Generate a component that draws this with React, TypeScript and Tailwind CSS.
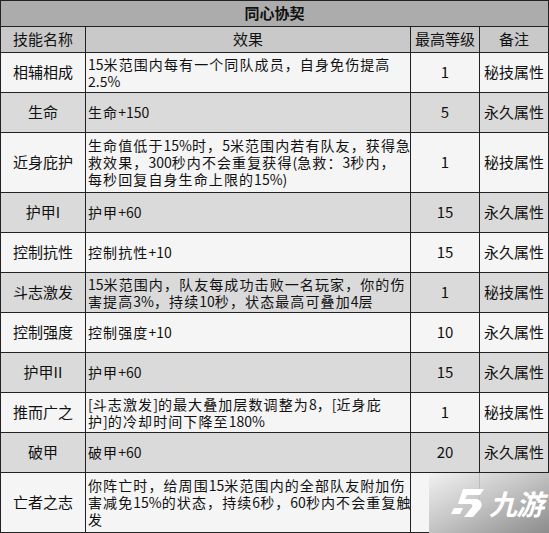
import React from "react";

type Row = {
  name: string;
  lines: string[];
  level: string;
  note: string;
  tall?: boolean;
};

const rows: Row[] = [
  { name: "相辅相成", lines: ["15米范围内每有一个同队成员，自身免伤提高", "2.5%"], level: "1", note: "秘技属性" },
  { name: "生命", lines: ["生命+150"], level: "5", note: "永久属性" },
  {
    name: "近身庇护",
    lines: ["生命值低于15%时，5米范围内若有队友，获得急", "救效果，300秒内不会重复获得(急救：3秒内，", "每秒回复自身生命上限的15%)"],
    level: "1",
    note: "秘技属性",
    tall: true,
  },
  { name: "护甲I", lines: ["护甲+60"], level: "15", note: "永久属性" },
  { name: "控制抗性", lines: ["控制抗性+10"], level: "15", note: "永久属性" },
  { name: "斗志激发", lines: ["15米范围内，队友每成功击败一名玩家，你的伤", "害提高3%，持续10秒，状态最高可叠加4层"], level: "1", note: "秘技属性" },
  { name: "控制强度", lines: ["控制强度+10"], level: "10", note: "永久属性" },
  { name: "护甲II", lines: ["护甲+60"], level: "15", note: "永久属性" },
  { name: "推而广之", lines: ["[斗志激发]的最大叠加层数调整为8，[近身庇", "护]的冷却时间下降至180%"], level: "1", note: "秘技属性" },
  { name: "破甲", lines: ["破甲+60"], level: "20", note: "永久属性" },
  {
    name: "亡者之志",
    lines: ["你阵亡时，给周围15米范围内的全部队友附加伤", "害减免15%的状态，持续6秒，60秒内不会重复触", "发"],
    level: "",
    note: "",
    tall: true,
  },
];

// ascii runs get no extra tracking so digits stay narrow like the original
function Line({ text }: { text: string }) {
  const parts = text.split(/([\x20-\x7e]+)/).filter(Boolean);
  return (
    <div className="h-[17px]">
      {parts.map((p, i) =>
        /^[\x20-\x7e]+$/.test(p) ? (
          <span key={i} className="tracking-[0px]">
            {p}
          </span>
        ) : (
          <React.Fragment key={i}>{p}</React.Fragment>
        )
      )}
    </div>
  );
}

function JiuyouMark() {
  return (
    <div className="absolute right-0 bottom-0 w-[120px] h-[60px] bg-gradient-to-br from-[#f0f0f0]/70 via-[#c2c2c2] to-[#8c8c8c] flex items-center justify-end gap-[3px] pr-[6px] pointer-events-none">
      <svg width="36" height="32" viewBox="0 0 36 32">
        <path
          d="M13 2 L34 2 L30 8 L17 8 L15 12 L25 12 C32 12 33 18 30 22 L23 30 L14 30 L22 20 C23 18 22 17 20 17 L8 17 Z"
          fill="#ffffff"
        />
        <path d="M4 21 L13 21 L10 27 L1 27 Z" fill="#ffffff" />
      </svg>
      <span className="text-white text-[28px] font-bold italic leading-none tracking-[-1px]">九游</span>
    </div>
  );
}

export default function App() {
  return (
    <div className="w-[549px] h-[533px] bg-white relative overflow-hidden text-[#111] font-['Noto_Sans_CJK_SC',sans-serif]">
      <div className="grid grid-cols-[85px_325px_69px_69px] border-t border-l border-[#222]">
        <div className="col-span-4 h-[26px] bg-[#acacac] border-r border-b border-[#222] flex items-center justify-center text-[15px] font-bold">
          同心协契
        </div>
        {["技能名称", "效果", "最高等级", "备注"].map((h) => (
          <div
            key={h}
            className="h-[26px] bg-[#c9c9c9] border-r border-b border-[#222] flex items-center justify-center text-[15px]"
          >
            {h}
          </div>
        ))}
        {rows.map((r, i) => {
          const bg = i % 2 === 0 ? "bg-[#f5f5f5]" : "bg-[#dadada]";
          const h = r.tall ? "h-[60px]" : "h-[40px]";
          return (
            <React.Fragment key={r.name}>
              <div className={`${bg} ${h} border-r border-b border-[#222] flex items-center justify-center text-[15px]`}>
                {r.name}
              </div>
              <div className={`${bg} ${h} border-r border-b border-[#222] flex flex-col justify-center pl-[2px] text-[14px] tracking-[1.1px] leading-[17px] whitespace-nowrap`}>
                {r.lines.map((l) => (
                  <Line key={l} text={l} />
                ))}
              </div>
              <div className={`${bg} ${h} border-r border-b border-[#222] flex items-center justify-center text-[15px]`}>
                {r.level}
              </div>
              <div className={`${bg} ${h} border-r border-b border-[#222] flex items-center justify-center text-[15px]`}>
                {r.note}
              </div>
            </React.Fragment>
          );
        })}
      </div>
      <JiuyouMark />
    </div>
  );
}
